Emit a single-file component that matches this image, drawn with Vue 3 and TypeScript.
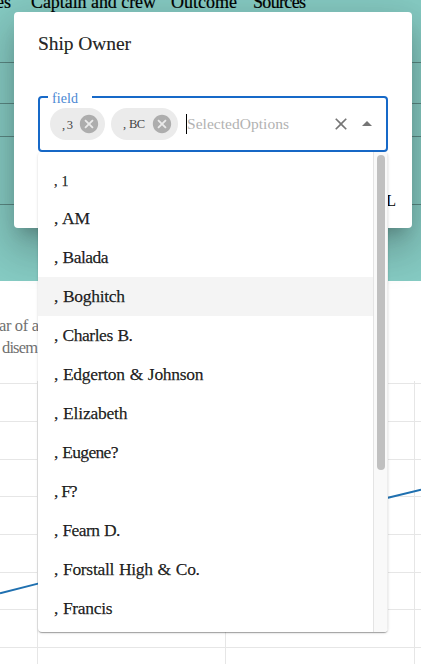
<script setup lang="ts">
interface Option {
  label: string
  width: number
}

const options: Option[] = [
  { label: ', 1', width: 14.5 },
  { label: ', AM', width: 36 },
  { label: ', Balada', width: 54.5 },
  { label: ', Boghitch', width: 71 },
  { label: ', Charles B.', width: 79 },
  { label: ', Edgerton & Johnson', width: 149.5 },
  { label: ', Elizabeth', width: 73.5 },
  { label: ', Eugene?', width: 64.5 },
  { label: ', F?', width: 23.5 },
  { label: ', Fearn D.', width: 66.5 },
  { label: ', Forstall High & Co.', width: 146 },
  { label: ', Francis', width: 58.5 },
]
const highlighted = 3

const chips: Option[] = [
  { label: ', 3', width: 11 },
  { label: ', BC', width: 22 },
]

const tabs: Option[] = [
  { label: 'Captain and crew', width: 125 },
  { label: 'Outcome', width: 66 },
  { label: 'Sources', width: 53 },
]

const rows = [383.5, 421.5, 459.5, 496.5, 534.5, 572.5, 609.5, 647.5]
const columns = [37.5, 225.5, 414.5]

// Tracks a label so that it fills the given width in pixels.
const vFit = {
  mounted(el: HTMLElement, binding: { value: number }) {
    const natural = el.getBoundingClientRect().width
    const count = (el.textContent ?? '').length
    el.style.letterSpacing = `${(binding.value - natural) / Math.max(1, count - 1)}px`
  },
}
</script>

<template>
  <div class="page">
    <header class="banner">
      <nav class="tabs">
        <span class="tab first">es</span>
        <span v-for="t in tabs" :key="t.label" class="tab"><span v-fit="t.width">{{ t.label }}</span></span>
      </nav>
      <i class="rule r1"></i><i class="rule r2"></i><i class="rule r3"></i><i class="rule r4"></i>
    </header>
    <section class="summary">
      <p><span v-fit="40">ar of a</span></p>
      <p class="second"><span v-fit="36">disem</span></p>
    </section>
    <svg class="chart" width="421" height="664" viewBox="0 0 421 664">
      <path v-for="y in rows" :key="'r' + y" :d="`M0 ${y}H421`" class="grid" />
      <path v-for="x in columns" :key="'c' + x" :d="`M${x} 381V664`" class="grid" />
      <path d="M0 593.2L38 583.6L225 538L388 497.8L421 489.6" class="series" />
    </svg>

    <div class="dialog">
      <h2><span v-fit="93">Ship Owner</span></h2>
      <div class="field">
        <label><span v-fit="26">field</span></label>
        <div v-for="(c, i) in chips" :key="c.label" class="chip">
          <span class="chip-label" :class="{ oldstyle: i === 0 }"><span v-fit="c.width">{{ c.label }}</span></span>
          <svg width="22" height="22" viewBox="0 0 24 24"><path d="M12 2C6.47 2 2 6.47 2 12s4.47 10 10 10 10-4.47 10-10S17.53 2 12 2zm5 13.59L15.59 17 12 13.41 8.41 17 7 15.59 10.59 12 7 8.41 8.41 7 12 10.59 15.59 7 17 8.41 13.41 12 17 15.59z" /></svg>
        </div>
        <div class="input"><i class="caret"></i><span v-fit="102">SelectedOptions</span></div>
        <svg class="clear" width="20" height="20" viewBox="0 0 24 24"><path d="M19 6.41L17.59 5 12 10.59 6.41 5 5 6.41 10.59 12 5 17.59 6.41 19 12 13.41 17.59 19 19 17.59 13.41 12z" /></svg>
        <svg class="arrow" width="24" height="24" viewBox="0 0 24 24"><path d="M7 14l5-5 5 5z" /></svg>
      </div>
      <div class="actions">CANCEL</div>
    </div>

    <div class="listbox">
      <ul>
        <li v-for="(o, i) in options" :key="o.label" :class="{ active: i === highlighted, numeral: i === 0 }">
          <span v-fit="o.width">{{ o.label }}</span>
        </li>
      </ul>
      <div class="track"><div class="thumb"></div></div>
    </div>
  </div>
</template>

<style>
body {
  overflow: hidden;
}
</style>

<style scoped>
.page {
  position: relative;
  width: 421px;
  height: 664px;
  overflow: hidden;
  background: #fff;
  font-family: "Liberation Serif", serif;
  color: rgba(0, 0, 0, 0.87);
  white-space: nowrap;
}
.banner {
  position: relative;
  height: 281px;
  background: #86cbc3;
}
.tabs {
  display: flex;
  height: 16px;
  margin-top: -8px;
  position: absolute;
  font-size: 18px;
  line-height: 20px;
  color: #000;
  -webkit-text-stroke: 0.2px;
}
.tab {
  width: 82px;
}
.tab.first {
  width: 35px;
  margin-left: -4px;
}
.tab:nth-child(2) {
  width: 140px;
}
.rule {
  position: absolute;
  left: 0;
  right: 0;
  height: 1px;
  background: rgba(0, 0, 0, 0.32);
}
.r1 { top: 62px; }
.r2 { top: 103px; }
.r3 { top: 136px; }
.r4 { top: 204px; }
.summary {
  padding-top: 34px;
  font-size: 16.5px;
  line-height: 22px;
  color: #707070;
}
.summary p {
  margin: 0 0 0 -1px;
}
.summary .second {
  margin-left: 2px;
}
.chart {
  position: absolute;
  left: 0;
  top: 0;
}
.grid {
  stroke: #e6e6e6;
  fill: none;
}
.series {
  stroke: #1f70b0;
  stroke-width: 2;
  fill: none;
}
.dialog {
  position: absolute;
  left: 14px;
  top: 12px;
  width: 398px;
  height: 216px;
  box-sizing: border-box;
  padding: 0 24px;
  border-radius: 4px;
  background: #fff;
  box-shadow: 0 11px 15px -7px rgba(0, 0, 0, 0.2), 0 24px 38px 3px rgba(0, 0, 0, 0.14), 0 9px 46px 8px rgba(0, 0, 0, 0.12);
}
h2 {
  margin: 0;
  padding-top: 16px;
  height: 68px;
  font-size: 19.5px;
  line-height: 32px;
  font-weight: 400;
  -webkit-text-stroke: 0.2px;
}
.field {
  position: relative;
  display: flex;
  align-items: center;
  box-sizing: border-box;
  height: 56px;
  padding-left: 10px;
  border: 2px solid #1769c8;
  border-radius: 4px;
}
label {
  position: absolute;
  left: 8px;
  top: -8px;
  width: 40px;
  padding-left: 4px;
  font-size: 14px;
  line-height: 18px;
  color: #4a88d3;
  background: #fff;
}
.chip {
  display: flex;
  align-items: center;
  justify-content: space-between;
  box-sizing: border-box;
  height: 32px;
  width: 55px;
  margin-right: 6px;
  padding: 0 5px 0 12px;
  border-radius: 16px;
  background: #ebebeb;
  font-size: 12.5px;
  color: #444;
}
.chip:nth-child(3) {
  width: 67px;
  margin-right: 8px;
}
.chip-label {
  word-spacing: 1px;
}
.chip-label.oldstyle {
  padding-top: 3px;
}
.chip svg {
  flex: none;
  fill: #adadad;
}
.input {
  position: relative;
  flex: 1;
  padding-left: 1px;
  font-size: 15.5px;
  line-height: 20px;
  color: #b2b2b2;
}
.caret {
  position: absolute;
  left: 0;
  top: 0;
  width: 1px;
  height: 20px;
  background: #000;
}
.clear,
.arrow {
  fill: #757575;
}
.clear {
  margin-right: 4px;
}
.arrow {
  margin-right: 7px;
}
.actions {
  margin: 35px -8px 0 0;
  font-size: 16.5px;
  line-height: 28px;
  text-align: right;
  color: #000;
}
.listbox {
  position: absolute;
  left: 38px;
  top: 152px;
  width: 350px;
  height: 480px;
  display: flex;
  border-radius: 4px;
  overflow: hidden;
  background: #fff;
  box-shadow: 0 2px 1px -1px rgba(0, 0, 0, 0.2), 0 1px 1px 0 rgba(0, 0, 0, 0.14), 0 1px 3px 0 rgba(0, 0, 0, 0.12);
}
ul {
  flex: 1;
  margin: 0;
  padding: 8px 0 0;
  list-style: none;
}
li {
  box-sizing: border-box;
  height: 39px;
  padding-left: 16px;
  font-size: 17.5px;
  line-height: 39px;
  word-spacing: 0.8px;
  -webkit-text-stroke: 0.25px;
}
li.active {
  background: #f4f4f4;
}
li.numeral {
  font-size: 14px;
  line-height: 43px;
}
.track {
  box-sizing: border-box;
  width: 15px;
  padding: 3px 2px 0 3px;
  border-left: 1px solid #e4e4e4;
  border-right: 1px solid #ededed;
  background: #f9f9f9;
}
.thumb {
  width: 8px;
  height: 315px;
  border-radius: 4px;
  background: #c0c0c0;
}
</style>
